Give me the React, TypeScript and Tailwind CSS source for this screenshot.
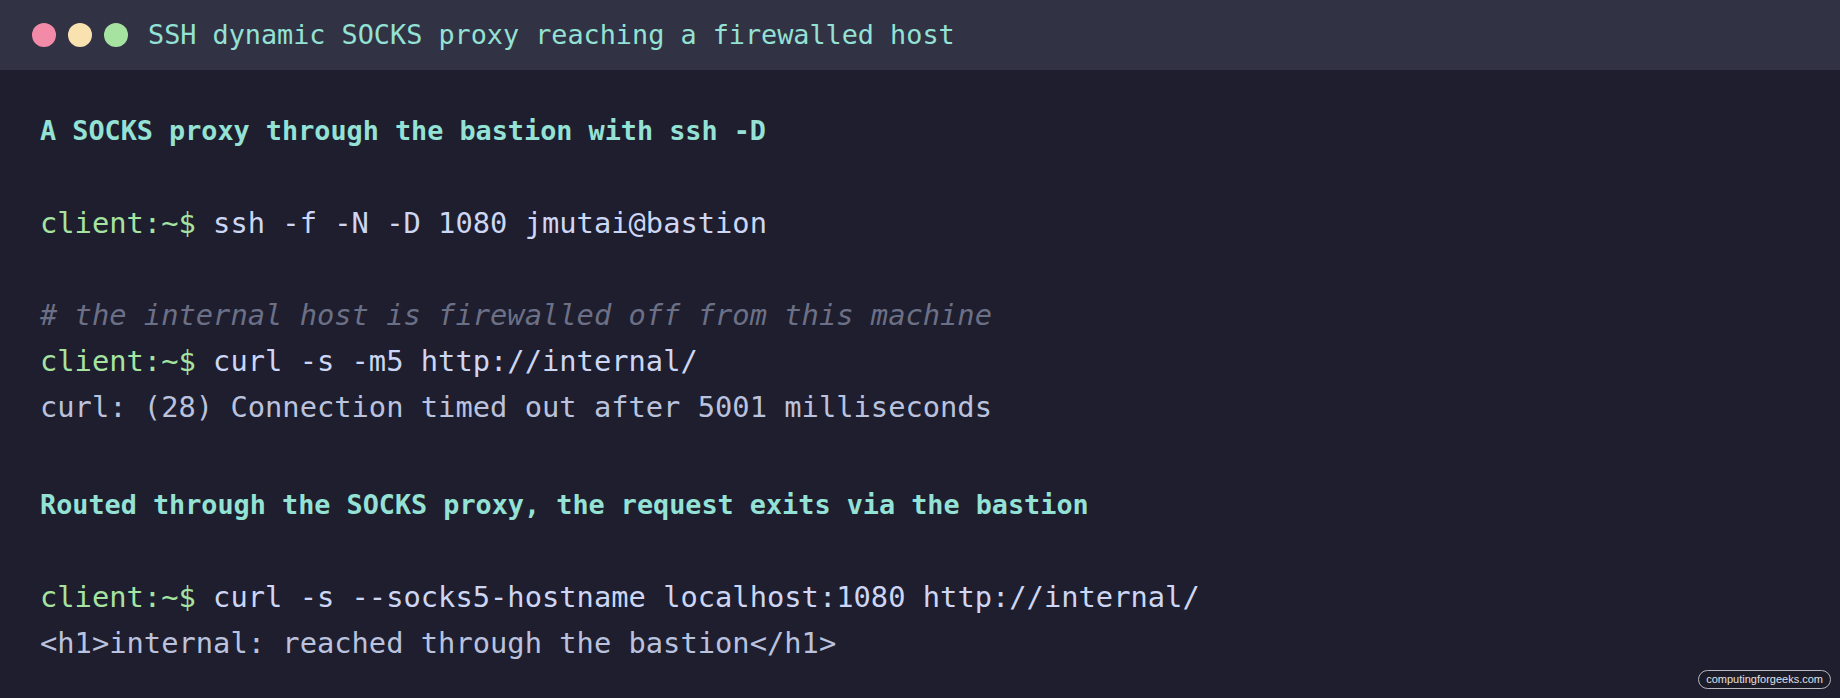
import React from 'react';

type Seg = { text: string; cls: string };
type Line = { kind: 'heading' | 'blank' | 'segs'; text?: string; segs?: Seg[] };

const PROMPT = 'text-[#a6e3a1]';
const CMD = 'text-[#cdd6f4]';
const OUT = 'text-[#bac2de]';
const NOTE = 'text-[#6c7086] italic';

const lines: Line[] = [
	{ kind: 'heading', text: 'A SOCKS proxy through the bastion with ssh -D' },
	{ kind: 'blank' },
	{
		kind: 'segs',
		segs: [
			{ text: 'client:~$ ', cls: PROMPT },
			{ text: 'ssh -f -N -D 1080 jmutai@bastion', cls: CMD },
		],
	},
	{ kind: 'blank' },
	{ kind: 'segs', segs: [{ text: '# the internal host is firewalled off from this machine', cls: NOTE }] },
	{
		kind: 'segs',
		segs: [
			{ text: 'client:~$ ', cls: PROMPT },
			{ text: 'curl -s -m5 http://internal/', cls: CMD },
		],
	},
	{ kind: 'segs', segs: [{ text: 'curl: (28) Connection timed out after 5001 milliseconds', cls: OUT }] },
	{ kind: 'blank' },
	{ kind: 'heading', text: 'Routed through the SOCKS proxy, the request exits via the bastion' },
	{ kind: 'blank' },
	{
		kind: 'segs',
		segs: [
			{ text: 'client:~$ ', cls: PROMPT },
			{ text: 'curl -s --socks5-hostname localhost:1080 http://internal/', cls: CMD },
		],
	},
	{ kind: 'segs', segs: [{ text: '<h1>internal: reached through the bastion</h1>', cls: OUT }] },
];

export default function App() {
	return (
		<div className="relative flex flex-col w-[1840px] h-[698px] overflow-hidden bg-[#1e1e2e] font-['DejaVu_Sans_Mono',monospace]">
			{/* window chrome */}
			<div className="flex flex-row items-center h-[70px] shrink-0 bg-[#313244] pl-8">
				<div className="flex flex-row gap-3">
					<span className="w-6 h-6 rounded-full bg-[#f38ba8]" />
					<span className="w-6 h-6 rounded-full bg-[#f9e2af]" />
					<span className="w-6 h-6 rounded-full bg-[#a6e3a1]" />
				</div>
				<div className="ml-5 text-[26.8px] leading-none text-[#94e2d5] whitespace-pre">
					SSH dynamic SOCKS proxy reaching a firewalled host
				</div>
			</div>

			{/* terminal body */}
			<div className="flex flex-col flex-1 pt-8 pl-10">
				{lines.map((line, i) => {
					if (line.kind === 'blank') return <div key={i} className="h-[46px]" />;
					if (line.kind === 'heading')
						return (
							<div
								key={i}
								className="mt-[6px] h-[46px] leading-[46px] text-[26.8px] font-bold text-[#94e2d5] whitespace-pre"
							>
								{line.text}
							</div>
						);
					return (
						<div key={i} className="h-[46px] leading-[46px] text-[28.75px] whitespace-pre">
							{line.segs!.map((s, j) => (
								<span key={j} className={s.cls}>
									{s.text}
								</span>
							))}
						</div>
					);
				})}
			</div>

			{/* watermark badge */}
			<div className="absolute right-[9px] bottom-[9px] h-[19px] px-[7px] flex items-center rounded-full border border-[#b8b8c0] bg-[#1c1c28] text-[11px] text-[#e0e0e6] font-['Liberation_Sans',sans-serif]">
				computingforgeeks.com
			</div>
		</div>
	);
}
